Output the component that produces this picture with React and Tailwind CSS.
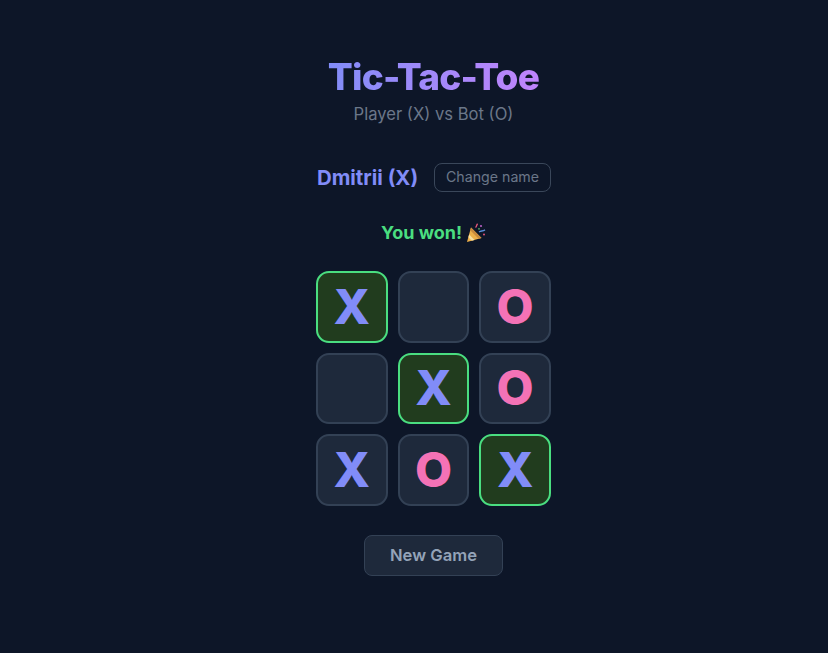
const cells = ['X', '', 'O', '', 'X', 'O', 'X', 'O', 'X'];
const winning = [0, 4, 8];

const Popper = () => (
  <svg width="20" height="20" viewBox="0 0 20 20" className="shrink-0">
    <path d="M5 4.5 L15.5 15 L1 19 Z" fill="#eeb04a" />
    <path d="M5 4.5 L15.5 15 L12.6 15.8 L4.2 7.2 Z" fill="#c98a3e" />
    <path d="M3.2 11.5 L8.6 17 L5.8 17.8 L2.4 14.2 Z" fill="#f8e0a0" />
    <path d="M9.5 4.5 C11 3.2 10.2 2.2 11.6 0.8" stroke="#e2557a" strokeWidth="1.4" fill="none" />
    <path d="M13 9 C15 7.5 16.5 8.5 19 6.8" stroke="#5b8fd9" strokeWidth="1.4" fill="none" />
    <circle cx="15" cy="3" r="1.1" fill="#b45fc4" />
    <circle cx="18" cy="11.5" r="1" fill="#e2557a" />
    <circle cx="13" cy="5.8" r="0.9" fill="#58b368" />
  </svg>
);

const Cell = ({ value, win }) => (
  <button
    className={`w-[71.67px] h-[71.67px] rounded-[13px] border-[2.5px] flex items-center justify-center text-[48px] leading-none font-extrabold ${
      win ? 'bg-[#213c1e] border-[#4ade80]' : 'bg-[#1e293b] border-[#334155]'
    } ${value === 'X' ? 'text-[#818cf8]' : 'text-[#f472b6]'}`}
  >
    {value}
  </button>
);

export default function App() {
  return (
    <div className="min-h-screen bg-[#0d1628] flex flex-col items-center pl-[39px] pt-[56px] font-['Inter',sans-serif]">
      <h1 className="text-[37px] leading-[42px] font-extrabold tracking-[-0.8px] text-transparent bg-clip-text bg-gradient-to-r from-[#818cf8] to-[#c084fc]">
        Tic-Tac-Toe
      </h1>
      <p className="mt-[4px] text-[16.6px] leading-6 text-[#6b7789]">Player (X) vs Bot (O)</p>

      <div className="mt-[37px] w-[235px] flex items-center justify-between">
        <span className="pl-[1px] text-[20.4px] leading-7 font-bold text-[#818cf8]">Dmitrii (X)</span>
        <button className="h-[29px] w-[117px] pb-[2px] rounded-lg border border-[#3a475a] text-[14.2px] text-[#6b7789]">
          Change name
        </button>
      </div>

      <div className="mt-[27px] h-7 flex items-center gap-1 text-lg font-bold text-[#4ade80]">
        <span>You won!</span>
        <Popper />
      </div>

      <div className="mt-[24px] w-[235px] grid grid-cols-3 gap-[10px]">
        {cells.map((value, i) => (
          <Cell key={i} value={value} win={winning.includes(i)} />
        ))}
      </div>

      <button className="mt-[29px] h-[41px] w-[139px] rounded-lg border border-[#334155] bg-[#1e293b] text-[16.6px] font-semibold text-[#94a3b8]">
        New Game
      </button>
    </div>
  );
}
